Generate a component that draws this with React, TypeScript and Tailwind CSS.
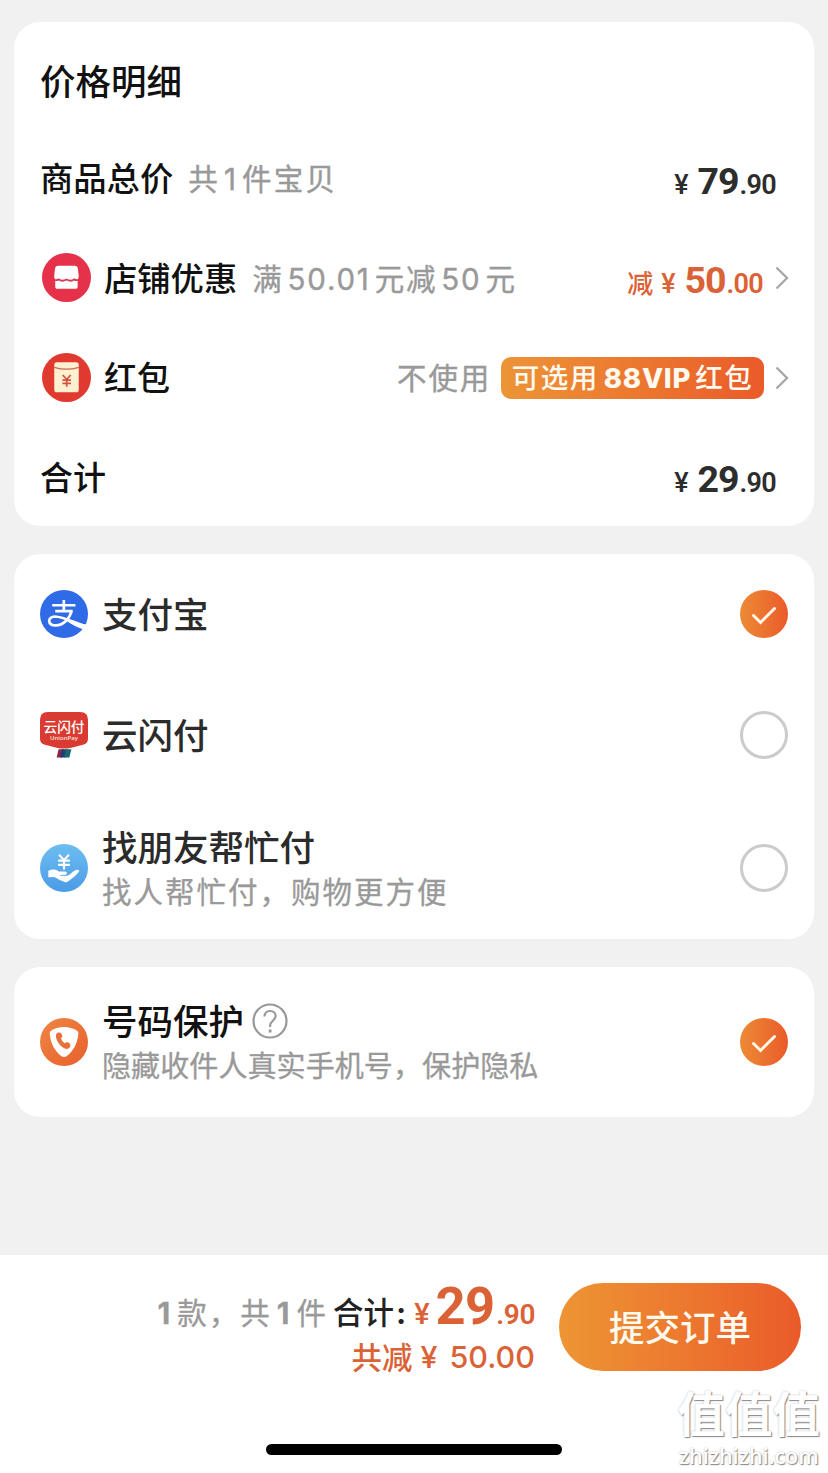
import type { ReactNode } from "react";

type PriceProps = {
  yuan: string;
  cents: string;
  prefix?: string;
  className?: string;
};

function Price({ yuan, cents, prefix, className = "" }: PriceProps) {
  return (
    <div className={`flex items-baseline pt-[7px] leading-none ${className}`}>
      {prefix && (
        <span className="mr-[8px] font-['Inter','Noto_Sans_CJK_SC',sans-serif] text-[26px] font-medium">{prefix}</span>
      )}
      <span className="mr-[9px] font-['Roboto',sans-serif] text-[27px] font-medium">¥</span>
      <span className="font-['Roboto',sans-serif] text-[37.5px] font-bold tracking-[-1px]">{yuan}</span>
      <span className="ml-[1px] font-['Roboto',sans-serif] text-[27px] font-semibold tracking-[-0.7px]">.{cents}</span>
    </div>
  );
}

function Card({ children, className = "" }: { children: ReactNode; className?: string }) {
  return <section className={`flex flex-col rounded-[26px] bg-white ${className}`}>{children}</section>;
}

function Num({ children }: { children: ReactNode }) {
  return <span className="mx-[4px]">{children}</span>;
}

function Chevron() {
  return (
    <svg viewBox="0 0 14 24" className="mt-[2px] h-6 w-[14px]" fill="none" stroke="#a8a8a8" strokeWidth="2.4">
      <path d="M1.5 1.5 12 12 1.5 22.5" />
    </svg>
  );
}

function Checked() {
  return (
    <div className="flex size-12 items-center justify-center rounded-full bg-linear-to-r from-[#ec8a35] to-[#ea5a2a]">
      <svg viewBox="0 0 26 20" className="mt-[3px] h-5 w-[26px]" fill="none" stroke="#fff8ea" strokeWidth="3">
        <path d="M2.5 9.5 9.5 16.5 23.5 2.5" strokeLinecap="round" />
      </svg>
    </div>
  );
}

function Unchecked() {
  return <div className="size-12 rounded-full border-3 border-[#cbcbcb]" />;
}

function ShopIcon() {
  return (
    <svg viewBox="0 0 48 48" className="size-[49px]">
      <circle cx="24" cy="24" r="24" fill="#e5324a" />
      <path
        d="M16 12.5h16c1.800 0 2.900 1 3.100 2.600l.8 6.400c.2 2-.2 3.500-1 4.500v7c0 1.300-.8 2-2 2H15c-1.200 0-2-.7-2-2v-7c-.8-1-1.200-2.500-1-4.500l.8-6.400c.2-1.600 1.400-2.600 3.200-2.600Z"
        fill="#fff"
      />
      <path
        d="M11.500 26.200c2 .7 3.500.5 5-.4 2 1.800 4.500 1.800 7.500.2 3 1.600 5.500 1.600 7.500-.2 1.500.9 3 1.100 5 .4"
        fill="none"
        stroke="#dc3a50"
        strokeWidth="1.800"
      />
    </svg>
  );
}

function RedPacketIcon() {
  return (
    <svg viewBox="0 0 48 48" className="size-[49px]">
      <circle cx="24" cy="24" r="24" fill="#e0392f" />
      <rect x="12" y="9" width="24" height="29.5" rx="2.5" fill="#fff0d2" />
      <path d="M12 14c7 2.200 17 2.200 24 0" fill="none" stroke="#c9694f" strokeWidth="1.200" />
      <path d="m20.300 21.500 3.900 4.500 3.900-4.500M24.200 26v7M20 26.500h8.400M20 29.800h8.400" fill="none" stroke="#cf5440" strokeWidth="1.700" />
    </svg>
  );
}

function AlipayIcon() {
  return (
    <svg viewBox="0 0 145 145" className="size-12">
      <circle cx="72.5" cy="72.5" r="72.5" fill="#2f6be6" />
      <g fill="none" stroke="#fff" strokeWidth="8">
        <path d="M37 46h70M46 64h52M72 30v34" />
        <path d="M96 62C90 86 70 107 48 107 22 107 21 81 45 80c22 0 50 14 94 30" />
      </g>
      <path d="M82 88c20 8 38 13 60 17l-8 15c-20-6-37-15-55-27Z" fill="#fff" />
    </svg>
  );
}

function UnionPayIcon() {
  return (
    <svg viewBox="0 0 49 48" className="size-12">
      <path d="M8 .5h33q8 0 8 8v19q0 5-5 6.500l-13 3.200q-6.500 1.400-13 0L5 34q-5-1.500-5-6.500v-19q0-8 8-8Z" fill="#d93a32" />
      <text x="24.5" y="20.500" textAnchor="middle" fontSize="14" fontWeight="500" fill="#fff" fontFamily="Noto Sans CJK SC, sans-serif">
        云闪付
      </text>
      <text x="24.5" y="29" textAnchor="middle" fontSize="6.200" fontWeight="600" fill="#ffe3dc" fontFamily="Open Sans, sans-serif">
        UnionPay
      </text>
      <path d="M19 38.500h5.500l-2 8.500H17Z" fill="#8d2440" />
      <path d="M22.500 38.500H28l-2 8.500h-5.500Z" fill="#213f75" />
      <path d="M26.500 38.500H32l-2 8.500h-5.500Z" fill="#17686f" />
    </svg>
  );
}

function FriendPayIcon() {
  return (
    <svg viewBox="0 0 49 49" className="size-12">
      <defs>
        <linearGradient id="friend" x1="0" y1="0" x2="0" y2="1">
          <stop offset="0" stopColor="#6dbdf2" />
          <stop offset="1" stopColor="#4b9be6" />
        </linearGradient>
      </defs>
      <circle cx="24.5" cy="24.5" r="24.5" fill="url(#friend)" />
      <path d="m19.500 11 5 5.500 5-5.500M24.500 16.500V26M18.500 17h12M18.500 21.300h12" fill="none" stroke="#fff" strokeWidth="2.200" />
      <path
        d="M8.500 27.200c4.500-1.600 7.700-1.400 10.500.8h6.500c2.600 0 2.600 3.300 0 3.400l-5 .2v.8h6.800c3.500-.3 7-6.400 11-6.200 1.600.1 2.200 1 1.400 2.200-4 5.300-8.500 8.300-13.200 11-4.200-1.200-8.300-4-12.500-5.600l-5.500.2Z"
        fill="#fff"
      />
    </svg>
  );
}

function PhoneShieldIcon() {
  return (
    <svg viewBox="0 0 49 49" className="size-12">
      <defs>
        <linearGradient id="shield" x1="0" y1="0" x2="1" y2="1">
          <stop offset="0" stopColor="#ee8644" />
          <stop offset="1" stopColor="#e8602c" />
        </linearGradient>
      </defs>
      <circle cx="24.5" cy="24.5" r="24.5" fill="url(#shield)" />
      <path
        d="M24.500 9.300c5 0 9.500 1.600 13 3.500 1.400.9 1.800 1.800 1.600 3.700C38 26 34 34 27 39q-2.500 1.400-5 0C15 34 11 26 10 16.500c-.2-1.900.2-2.800 1.600-3.700 3.400-1.900 7.900-3.500 12.900-3.500Z"
        fill="#fff"
      />
      <path
        d="M16.800 16.200c1.200-1.700 3.600-2 4.900-.5 1.500 1.800 1.500 3.400-.2 4.800.2 2.300 1.800 4.300 4 5.200 1.700-1.400 3.700-.9 5 .7 1.100 1.500.6 3.600-1.100 4.600-2.800 1.600-7-.6-9.600-4.100-2.700-3.600-4.500-8.200-3-10.700Z"
        fill="#e8703a"
      />
    </svg>
  );
}

export default function App() {
  return (
    <main className="relative flex h-[1473px] w-[828px] flex-col overflow-hidden bg-[#f1f1f1] font-['Inter','Noto_Sans_CJK_SC',sans-serif] leading-none whitespace-nowrap text-[#111]">
      <div className="flex flex-1 flex-col gap-7 px-[14px] pt-[22px]">
        <Card className="h-[504px] pt-[7px]">
          <div className="flex h-[99.5px] items-center pt-2 pl-[26px]">
            <h2 className="text-[35.5px] font-medium">价格明细</h2>
          </div>
          <div className="flex h-[99.5px] items-center pr-[38px] pl-[26px]">
            <span className="pt-[4px] text-[33.3px] font-medium">商品总价</span>
            <span className="ml-[15px] pt-[4px] text-[29.5px] tracking-[2.2px] text-[#999] [-webkit-text-stroke:0.4px_#999]">
              共<Num>1</Num>件宝贝
            </span>
            <Price yuan="79" cents="90" className="ml-auto text-[#2d2d2d]" />
          </div>
          <div className="flex h-[99.5px] items-center pr-[25px] pl-7">
            <ShopIcon />
            <span className="ml-[13px] pt-[5px] text-[33.3px] font-medium">店铺优惠</span>
            <span className="ml-[15px] pt-[4px] text-[29.5px] tracking-[1.8px] text-[#999] [-webkit-text-stroke:0.4px_#999]">
              满<Num>50.01</Num>元减<Num>50</Num>元
            </span>
            <Price prefix="减" yuan="50" cents="00" className="mr-3 ml-auto text-[#db6236]" />
            <Chevron />
          </div>
          <div className="flex h-[99.5px] items-center pt-[1px] pr-[25px] pl-7">
            <RedPacketIcon />
            <span className="ml-[13px] pt-[3px] text-[33px] font-medium">红包</span>
            <span className="ml-auto pt-[3px] text-[29.5px] tracking-[1.8px] text-[#999] [-webkit-text-stroke:0.4px_#999]">
              不使用
            </span>
            <div className="mt-[2px] mr-[11px] ml-[10px] flex h-[42px] w-[263px] items-center justify-center rounded-[10px] bg-linear-to-r from-[#ec9436] to-[#ea5a2a] text-[27.5px] font-medium tracking-[1.5px] text-[#fffaf0]">
              <span className="pt-[1px]">可选用</span>
              <span className="mr-[4px] ml-[5px] text-[27.5px] font-extrabold tracking-[0.8px]">88VIP</span>
              <span className="pt-[1px]">红包</span>
            </div>
            <Chevron />
          </div>
          <div className="flex h-[99.5px] items-center pr-[38px] pl-[26px]">
            <span className="pt-[5px] text-[33px] font-medium">合计</span>
            <Price yuan="29" cents="90" className="ml-auto text-[#2d2d2d]" />
          </div>
        </Card>

        <Card className="h-[385px] px-[26px] text-[#2b2b2b]">
          <div className="flex h-[120px] items-center">
            <AlipayIcon />
            <span className="ml-[14px] pt-[4px] text-[35.5px] font-medium">支付宝</span>
            <div className="ml-auto">
              <Checked />
            </div>
          </div>
          <div className="flex h-[122px] items-center">
            <UnionPayIcon />
            <span className="ml-[14px] pt-[4px] text-[35.5px] font-medium">云闪付</span>
            <div className="ml-auto">
              <Unchecked />
            </div>
          </div>
          <div className="flex h-[143px] items-center">
            <FriendPayIcon />
            <div className="ml-[14px] flex flex-col gap-[11px] pt-[3px]">
              <span className="text-[35.5px] font-medium">找朋友帮忙付</span>
              <span className="text-[29.5px] tracking-[2px] text-[#999] [-webkit-text-stroke:0.3px_#999]">
                找人帮忙付，购物更方便
              </span>
            </div>
            <div className="ml-auto">
              <Unchecked />
            </div>
          </div>
        </Card>

        <Card className="h-[150px] justify-center px-[26px]">
          <div className="flex items-center">
            <PhoneShieldIcon />
            <div className="ml-[14px] flex flex-col gap-[13px] pt-[1px]">
              <div className="flex h-9 items-center">
                <span className="pt-[2px] text-[35.5px] font-medium">号码保护</span>
                <svg viewBox="0 0 36 36" className="ml-2 size-9" fill="none" stroke="#999" strokeWidth="2.200">
                  <circle cx="18" cy="18" r="16.5" />
                  <path d="M12.500 13.500c.2-3.500 2.500-5.500 5.600-5.500 3.200 0 5.500 2 5.500 5 0 4.500-5.500 5-5.500 9.500v1.500" />
                  <path d="M18.100 26.500v3" strokeWidth="2.800" />
                </svg>
              </div>
              <span className="text-[29.1px] text-[#999] [-webkit-text-stroke:0.3px_#999]">
                隐藏收件人真实手机号，保护隐私
              </span>
            </div>
            <div className="ml-auto">
              <Checked />
            </div>
          </div>
        </Card>
      </div>

      <footer className="flex h-[218px] flex-col justify-between bg-white">
        <div className="flex items-start justify-end gap-6 pt-7 pr-[27px]">
          <div className="-mt-[3px] flex flex-col items-end">
            <div className="flex h-[51px] items-baseline text-[29px]">
              <span className="text-[29.5px] tracking-[2px] text-[#999] [-webkit-text-stroke:0.3px_#999]">
                <b className="mr-[5px]">1</b>款，共
                <b className="mx-[5px]">1</b>件
              </span>
              <span className="ml-[5px] text-[30.5px] font-medium text-[#222]">
                合计<b className="ml-[2px]">:</b>
              </span>
              <span className="ml-[8px] font-['Roboto',sans-serif] text-[29px] font-medium text-[#db6236]">¥</span>
              <span className="ml-[6px] font-['Roboto',sans-serif] text-[52.5px] font-bold tracking-[-0.8px] text-[#db6236]">
                29
              </span>
              <span className="ml-[2px] font-['Roboto',sans-serif] text-[28px] font-semibold tracking-[-0.4px] text-[#db6236]">
                .90
              </span>
            </div>
            <div className="flex h-[52px] items-center text-[30.5px] font-medium text-[#db6236]">
              <span className="pt-[2px]">共减</span>
              <span className="ml-[8px]">¥</span>
              <span className="ml-[12px]">50.00</span>
            </div>
          </div>
          <button className="h-[88px] w-[242px] rounded-full bg-linear-to-r from-[#ed9534] to-[#ea5a2a] pt-[3px] text-[35.5px] font-medium text-[#fffaf0]">
            提交订单
          </button>
        </div>
        <div className="flex justify-center pb-[18px]">
          <div className="h-[11px] w-[296px] rounded-full bg-black" />
        </div>
      </footer>

      <div className="absolute right-[8px] bottom-[7px] flex flex-col items-center text-white [text-shadow:1px_1px_1px_#888,0_0_2px_#bbb]">
        <span className="text-[47.5px] font-bold">值值值</span>
        <span className="mt-[6px] font-['Open_Sans',sans-serif] text-[21.5px] font-semibold">zhizhizhi.com</span>
      </div>
    </main>
  );
}
